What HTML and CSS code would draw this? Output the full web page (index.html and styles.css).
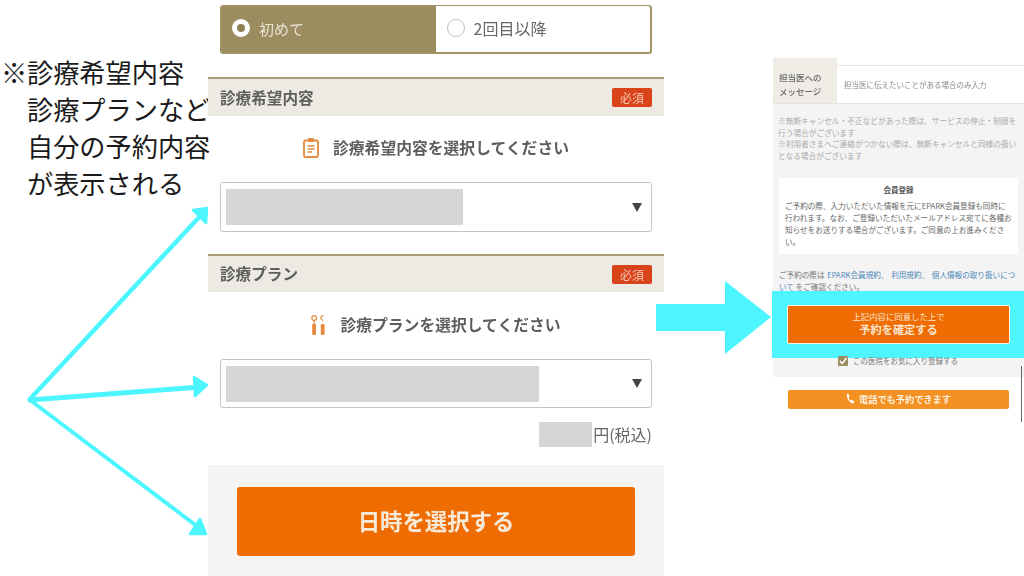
FILE: index.html
```html
<!DOCTYPE html>
<html lang="ja">
<head>
<meta charset="utf-8">
<title>診療希望内容</title>
<link rel="stylesheet" href="styles.css">
</head>
<body>
<div class="slide">
  <div class="note">
    <div class="note-line"><span class="mark">※</span>診療希望内容</div>
    <div class="note-line">診療プランなど</div>
    <div class="note-line">自分の予約内容</div>
    <div class="note-line">が表示される</div>
  </div>

  <main class="form">
    <div class="toggle">
      <div class="opt opt-on"><span class="radio radio-on"></span>初めて</div>
      <div class="opt opt-off"><span class="radio"></span>2回目以降</div>
    </div>

    <section class="block block-first">
      <header class="head"><h2>診療希望内容</h2><span class="badge">必須</span></header>
      <p class="prompt">
        <svg class="ico" viewBox="0 0 16 20" width="16" height="20"><rect x="1" y="2.500" width="14" height="16.500" rx="1.500" fill="#fff" stroke="#e58a3c" stroke-width="1.800"/><rect x="5" y="0" width="6" height="4" rx="1" fill="#e58a3c"/><path d="M4.500 8h7M4.500 11h7M4.500 14h4.500" stroke="#e58a3c" stroke-width="1.300" fill="none"/></svg>
        診療希望内容を選択してください
      </p>
      <div class="select"><span class="mask mask-a"></span><span class="caret"></span></div>
    </section>

    <section class="block block-second">
      <header class="head"><h2>診療プラン</h2><span class="badge">必須</span></header>
      <p class="prompt">
        <svg class="ico" viewBox="0 0 15 20" width="15" height="20"><circle cx="3.200" cy="3" r="2.400" fill="none" stroke="#e58a3c" stroke-width="1.200"/><path d="M3.200 5.500v5M11.500 6c0-1.500-1.800-2-1.800-3.200S11 .8 12.500.5" fill="none" stroke="#e58a3c" stroke-width="1.200"/><rect x="1.200" y="9" width="3.800" height="11" rx="1" fill="#e58a3c"/><rect x="9.800" y="9" width="3.800" height="11" rx="1" fill="#e58a3c"/></svg>
        診療プランを選択してください
      </p>
      <div class="select"><span class="mask mask-b"></span><span class="caret"></span></div>
    </section>

    <div class="price"><span class="mask-price"></span>円(税込)</div>

    <div class="action"><button class="go" type="button">日時を選択する</button></div>
  </main>

  <aside class="shot">
    <div class="shot-row">
      <div class="shot-label">担当医への<br>メッセージ</div>
      <div class="shot-input">担当医に伝えたいことがある場合のみ入力</div>
    </div>
    <div class="shot-gray">
      <p class="shot-notes">※無断キャンセル・不正などがあった際は、サービスの停止・制限を行う場合がございます<br>※利用者さまへご連絡がつかない際は、無断キャンセルと同様の扱いとなる場合がございます</p>
      <div class="shot-card">
        <h3>会員登録</h3>
        <p>ご予約の際、入力いただいた情報を元にEPARK会員登録も同時に行われます。なお、ご登録いただいたメールアドレス宛てに各種お知らせをお送りする場合がございます。ご同意の上お進みください。</p>
      </div>
      <p class="shot-terms">ご予約の際は <a>EPARK会員規約、</a> <a>利用規約、</a> <a>個人情報の取り扱いについて</a> をご確認ください。</p>
      <div class="shot-band"></div>
      <button class="shot-go" type="button"><small>上記内容に同意した上で</small>予約を確定する</button>
      <div class="shot-check"><span class="box"><svg viewBox="0 0 10 10" width="10" height="10"><path d="M2 5l2.200 2.400L8.500 2" fill="none" stroke="#fff" stroke-width="1.600"/></svg></span>この医院をお気に入り登録する</div>
    </div>
    <button class="shot-tel" type="button"><svg viewBox="0 0 10 12" width="9" height="11"><path d="M2 .5L4 3 3 4.500c.3 1.500 1 2.800 2.300 3.800L7 7.500l2.500 2.300-1.500 1.700C4 11 1 6 .8 1.500z" fill="#fff"/></svg>電話でも予約できます</button>
    <span class="shot-scroll"></span>
  </aside>

  <svg class="arrows" viewBox="0 0 1024 576" width="1024" height="576">
    <g stroke="#4df6ff" fill="#4df6ff" stroke-linejoin="round" stroke-linecap="round">
      <path d="M30 399L203 213" stroke-width="4.500" fill="none"/>
      <path d="M30 400L200 387" stroke-width="5" fill="none"/>
      <path d="M30 400L202 530" stroke-width="4" fill="none"/>
      <path d="M193 210L207 208L206 223Z" stroke-width="2.500"/>
      <path d="M194 377L207 385L195 396Z" stroke-width="2.500"/>
      <path d="M200 519L206 534L190 534Z" stroke-width="2.500"/>
      <path d="M656 304H725V281L771 317L725 354V331H656Z" stroke="none"/>
    </g>
  </svg>
</div>
</body>
</html>
```
FILE: styles.css
```css
* { box-sizing: border-box; }
html, body { margin: 0; padding: 0; }
body { background: #fff; font-family: "Noto Sans CJK JP", "Noto Sans", sans-serif; overflow: hidden; }
.slide { position: relative; width: 1024px; height: 576px; overflow: hidden; background: #fff; }

.note { position: absolute; left: 0; top: 54px; width: 210px; padding-left: 27px; font-size: 26.200px; line-height: 37px; color: #1a1a1a; font-weight: 400; white-space: nowrap; }
.note-line { position: relative; }
.mark { position: absolute; left: -26px; top: 0; }

.form { position: absolute; left: 208px; top: 0; width: 456px; height: 576px; display: flex; flex-direction: column; color: #555; filter: blur(.35px); }
.toggle { margin: 5px 12px 0; height: 49px; display: flex; border: 2px solid #a29468; border-top-width: 1px; border-left-width: 1px; border-radius: 3px; overflow: hidden; }
.opt { flex: 0 0 50%; display: flex; align-items: center; gap: 9px; padding: 0 0 2px 11px; font-size: 15px; color: #666; }
.opt-off { font-size: 16px; }
.opt-on { background: #9c8d60; color: #e8e3d2; }
.radio { width: 18px; height: 18px; border-radius: 50%; border: 1px solid #bbb; background: #fff; }
.radio-on { border: 5px solid #fff; background: #8f8257; }

.block-first { margin-top: 23px; }
.block-second { margin-top: 22px; }
.head { height: 39px; border-top: 2px solid #a89a72; background: #eceae2; display: flex; align-items: center; justify-content: space-between; padding: 0 12px; }
.block-second .head { height: 38px; }
.head h2 { margin: 0 0 2px; font-size: 15.600px; font-weight: 700; color: #5e5e5e; }
.badge { width: 40px; height: 19px; background: #d9431a; color: #f3c8b5; font-size: 12px; line-height: 19px; border-radius: 2px; text-align: center; }
.prompt { margin: 0; height: 66px; display: flex; align-items: center; justify-content: center; gap: 14px; padding-bottom: 3px; font-size: 15.800px; font-weight: 700; color: #5e5e5e; }
.block-second .prompt { height: 67px; padding-bottom: 2px; }
.select { margin: 0 12px; height: 50px; border: 1px solid #c4c4c4; border-radius: 3px; display: flex; align-items: center; justify-content: space-between; padding: 0 9px 0 5px; background: #fff; }
.block-second .select { height: 49px; }
.mask { height: 36px; background: #d6d6d6; }
.mask-a { width: 237px; }
.mask-b { width: 313px; }
.caret { width: 0; height: 0; border-left: 5.500px solid transparent; border-right: 5.500px solid transparent; border-top: 9px solid #444; }
.price { margin: 14px 12px 0 0; height: 25px; display: flex; justify-content: flex-end; align-items: center; padding-bottom: 2px; font-size: 16px; color: #666; }
.mask-price { width: 53px; height: 25px; background: #d6d6d6; margin: 0 1px -2px 0; }
.action { margin-top: 18px; flex: 1; background: #f4f4f4; padding: 22px 29px 0; }
.go { display: block; width: 398px; height: 69px; border: 0; border-radius: 3px; background: #ef6c02; color: #f8ead8; font-family: inherit; font-size: 22.400px; font-weight: 700; padding: 0 0 3px; }

.shot { position: absolute; left: 773px; top: 58px; width: 251px; height: 364px; filter: blur(.5px); color: #777; }
.shot-row { height: 45px; display: flex; }
.shot-label { width: 64px; background: #eeece4; padding: 13px 0 0 6px; font-size: 8.500px; line-height: 13.500px; font-weight: 500; color: #666; white-space: nowrap; }
.shot-input { flex: 1; margin-top: 7px; border-top: 1px solid #ebe8dc; padding: 13px 0 0 7px; font-size: 7.500px; color: #888; white-space: nowrap; }
.shot-gray { position: relative; height: 274px; background: #f4f4f5; border-top: 1px solid #e3e3e3; padding: 11px 0 0 5px; }
.shot-notes { margin: 0; width: 241px; font-size: 7.700px; line-height: 11.600px; color: #aaa; }
.shot-card { margin: 17px 0 0 1px; width: 239px; height: 76px; background: #fff; padding: 6px 6px 0; }
.shot-card h3 { margin: 0 0 4px; text-align: center; font-size: 7.500px; line-height: 12px; font-weight: 700; color: #555; }
.shot-card p { margin: 0; font-size: 7.600px; line-height: 11.800px; color: #666; }
.shot-terms { margin: 15px 0 0 1px; width: 240px; font-size: 7.600px; line-height: 11.500px; color: #777; }
.shot-terms a { color: #4a86b8; margin-left: 1px; }
.shot-band { position: absolute; left: -1px; top: 187px; width: 252px; height: 67px; background: #4df6ff; }
.shot-go { position: absolute; left: 14px; top: 201px; width: 223px; height: 39px; background: #ef6c02; border: 1px solid #fff3e5; border-radius: 2px; color: #fbe6d0; font-family: inherit; font-size: 11.200px; font-weight: 700; line-height: 14px; padding: 0 0 3px; display: flex; flex-direction: column; align-items: center; justify-content: center; }
.shot-go small { font-size: 8.400px; line-height: 12px; font-weight: 400; }
.shot-check { position: absolute; left: 65px; top: 251px; display: flex; align-items: center; gap: 5px; font-size: 7.500px; color: #777; white-space: nowrap; }
.box { width: 10px; height: 10px; background: #9c8d60; border-radius: 1px; display: flex; }
.shot-tel { margin: 13px 0 0 15px; width: 221px; height: 19px; border: 0; border-radius: 2px; background: #f39123; color: #fff2e2; font-family: inherit; font-size: 9.200px; font-weight: 700; display: flex; align-items: center; justify-content: center; gap: 4px; padding: 0 0 2px; }
.shot-scroll { position: absolute; right: 2px; top: 308px; width: 1.500px; height: 56px; background: #666; }

.arrows { position: absolute; left: 0; top: 0; pointer-events: none; }
```
